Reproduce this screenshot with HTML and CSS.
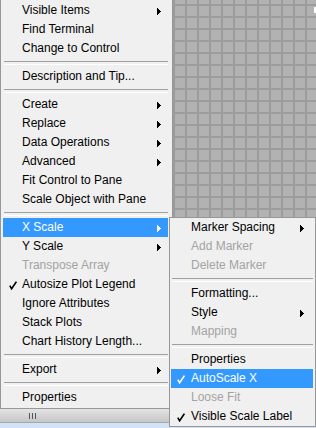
FILE: index.html
```html
<!DOCTYPE html>
<html lang="en">
<head>
    <meta charset="UTF-8">
    <title>Graph context menu</title>
    <link rel="stylesheet" href="styles.css">
</head>
<body>
    <div class="screen">
        <div class="menu main-menu">
            <div class="item"><span class="mark"></span><span class="label">Visible Items</span><svg class="arrow" width="4" height="7" viewBox="0 0 4 7"><path d="M0 0h1v1h1v1h1v1h1v1h-1v1h-1v1h-1v1h-1z"/></svg></div>
            <div class="item"><span class="mark"></span><span class="label">Find Terminal</span></div>
            <div class="item"><span class="mark"></span><span class="label">Change to Control</span></div>
            <div class="sep"></div>
            <div class="item"><span class="mark"></span><span class="label">Description and Tip...</span></div>
            <div class="sep"></div>
            <div class="item"><span class="mark"></span><span class="label">Create</span><svg class="arrow" width="4" height="7" viewBox="0 0 4 7"><path d="M0 0h1v1h1v1h1v1h1v1h-1v1h-1v1h-1v1h-1z"/></svg></div>
            <div class="item"><span class="mark"></span><span class="label">Replace</span><svg class="arrow" width="4" height="7" viewBox="0 0 4 7"><path d="M0 0h1v1h1v1h1v1h1v1h-1v1h-1v1h-1v1h-1z"/></svg></div>
            <div class="item"><span class="mark"></span><span class="label">Data Operations</span><svg class="arrow" width="4" height="7" viewBox="0 0 4 7"><path d="M0 0h1v1h1v1h1v1h1v1h-1v1h-1v1h-1v1h-1z"/></svg></div>
            <div class="item"><span class="mark"></span><span class="label">Advanced</span><svg class="arrow" width="4" height="7" viewBox="0 0 4 7"><path d="M0 0h1v1h1v1h1v1h1v1h-1v1h-1v1h-1v1h-1z"/></svg></div>
            <div class="item"><span class="mark"></span><span class="label">Fit Control to Pane</span></div>
            <div class="item"><span class="mark"></span><span class="label">Scale Object with Pane</span></div>
            <div class="sep"></div>
            <div class="item active"><span class="mark"></span><span class="label">X Scale</span><svg class="arrow" width="4" height="7" viewBox="0 0 4 7"><path d="M0 0h1v1h1v1h1v1h1v1h-1v1h-1v1h-1v1h-1z"/></svg></div>
            <div class="item"><span class="mark"></span><span class="label">Y Scale</span><svg class="arrow" width="4" height="7" viewBox="0 0 4 7"><path d="M0 0h1v1h1v1h1v1h1v1h-1v1h-1v1h-1v1h-1z"/></svg></div>
            <div class="item disabled"><span class="mark"></span><span class="label">Transpose Array</span></div>
            <div class="item"><span class="mark"><svg class="check" width="8" height="9" viewBox="0 0 8 9"><polyline points="0.8,4.6 2.6,7.8 7.4,0.6"/></svg></span><span class="label">Autosize Plot Legend</span></div>
            <div class="item"><span class="mark"></span><span class="label">Ignore Attributes</span></div>
            <div class="item"><span class="mark"></span><span class="label">Stack Plots</span></div>
            <div class="item"><span class="mark"></span><span class="label">Chart History Length...</span></div>
            <div class="sep"></div>
            <div class="item"><span class="mark"></span><span class="label">Export</span><svg class="arrow" width="4" height="7" viewBox="0 0 4 7"><path d="M0 0h1v1h1v1h1v1h1v1h-1v1h-1v1h-1v1h-1z"/></svg></div>
            <div class="sep"></div>
            <div class="item"><span class="mark"></span><span class="label">Properties</span></div>
        </div>

        <div class="hscroll">
            <svg class="grip" width="7" height="6" viewBox="0 0 7 6">
                <rect x="0" y="0" width="1" height="6"/>
                <rect x="3" y="0" width="1" height="6"/>
                <rect x="6" y="0" width="1" height="6"/>
            </svg>
        </div>
        <div class="status-strip"></div>

        <div class="menu sub-menu">
            <div class="item"><span class="mark"></span><span class="label">Marker Spacing</span><svg class="arrow" width="4" height="7" viewBox="0 0 4 7"><path d="M0 0h1v1h1v1h1v1h1v1h-1v1h-1v1h-1v1h-1z"/></svg></div>
            <div class="item disabled"><span class="mark"></span><span class="label">Add Marker</span></div>
            <div class="item disabled"><span class="mark"></span><span class="label">Delete Marker</span></div>
            <div class="sep"></div>
            <div class="item"><span class="mark"></span><span class="label">Formatting...</span></div>
            <div class="item"><span class="mark"></span><span class="label">Style</span><svg class="arrow" width="4" height="7" viewBox="0 0 4 7"><path d="M0 0h1v1h1v1h1v1h1v1h-1v1h-1v1h-1v1h-1z"/></svg></div>
            <div class="item disabled"><span class="mark"></span><span class="label">Mapping</span></div>
            <div class="sep"></div>
            <div class="item"><span class="mark"></span><span class="label">Properties</span></div>
            <div class="item active"><span class="mark"><svg class="check" width="8" height="9" viewBox="0 0 8 9"><polyline points="0.8,4.6 2.6,7.8 7.4,0.6"/></svg></span><span class="label">AutoScale X</span></div>
            <div class="item disabled"><span class="mark"></span><span class="label">Loose Fit</span></div>
            <div class="item"><span class="mark"><svg class="check" width="8" height="9" viewBox="0 0 8 9"><polyline points="0.8,4.6 2.6,7.8 7.4,0.6"/></svg></span><span class="label">Visible Scale Label</span></div>
        </div>

        <div class="corner-tab"></div>
    </div>
</body>
</html>
```

FILE: styles.css
```css
:root {
    --menu-bg: #f0f0f0;
    --menu-border: #979797;
    --sep-color: #a0a0a0;
    --highlight: #3399ff;
    --disabled: #a3a3a3;
    --grid-cell: #b2b2b2;
    --grid-line: #9c9c9c;
}

* {
    margin: 0;
    padding: 0;
    box-sizing: border-box;
}

body {
    width: 316px;
    height: 428px;
    overflow: hidden;
    font-family: "Liberation Sans", Arial, sans-serif;
    font-size: 12px;
    color: #000;
    background-color: var(--grid-cell);
    background-image:
        linear-gradient(to right, var(--grid-line) 2px, transparent 2px),
        linear-gradient(to bottom, var(--grid-line) 2px, transparent 2px);
    background-size: 12px 12px;
    background-position: 5px 4px;
}

.screen {
    position: relative;
    width: 316px;
    height: 428px;
    display: flex;
    flex-direction: column;
}

.menu {
    background: var(--menu-bg);
    border: 1px solid var(--menu-border);
}

.main-menu {
    width: 173px;
    border-top: none;
    padding: 1px 4px 1px 2px;
}

.sub-menu {
    position: absolute;
    left: 169px;
    top: 217px;
    width: 147px;
    padding: 0 2px 0 1px;
}

.item {
    display: flex;
    align-items: center;
    height: 19px;
    line-height: 19px;
    white-space: nowrap;
    padding-right: 7px;
}

.sub-menu .item {
    padding-right: 9px;
}

.item .mark {
    width: 19px;
    height: 19px;
    flex: none;
    display: flex;
    align-items: center;
    padding-left: 6px;
    padding-top: 1px;
}

.sub-menu .item .mark {
    width: 20px;
}

.item .label {
    flex: 1;
}

.arrow {
    flex: none;
    margin-top: 2px;
    shape-rendering: crispEdges;
}

.arrow path {
    fill: #000;
}

.check polyline {
    fill: none;
    stroke: #000;
    stroke-width: 1.6;
}

.item.active {
    background: var(--highlight);
    color: #fff;
}

.item.active .arrow path {
    fill: #fff;
}

.item.active .check polyline {
    stroke: #fff;
}

.item.disabled {
    color: var(--disabled);
}

.sep {
    height: 9px;
    display: flex;
    align-items: center;
    padding-left: 1px;
}

.sep::before {
    content: "";
    flex: 1;
    height: 2px;
    border-top: 1px solid var(--sep-color);
    border-bottom: 1px solid #fff;
}

.hscroll {
    height: 14px;
    background: linear-gradient(to bottom, #e4e4e4, #c6c6c6);
    border-bottom: 1px solid #a8a8a8;
    display: flex;
    align-items: center;
    padding-left: 29px;
}

.grip rect {
    fill: #555;
}

.status-strip {
    flex: 1;
    background: #d2e3f7;
}

.corner-tab {
    position: absolute;
    right: 0;
    top: 7px;
    width: 2px;
    height: 6px;
    background: #fff;
}
```
